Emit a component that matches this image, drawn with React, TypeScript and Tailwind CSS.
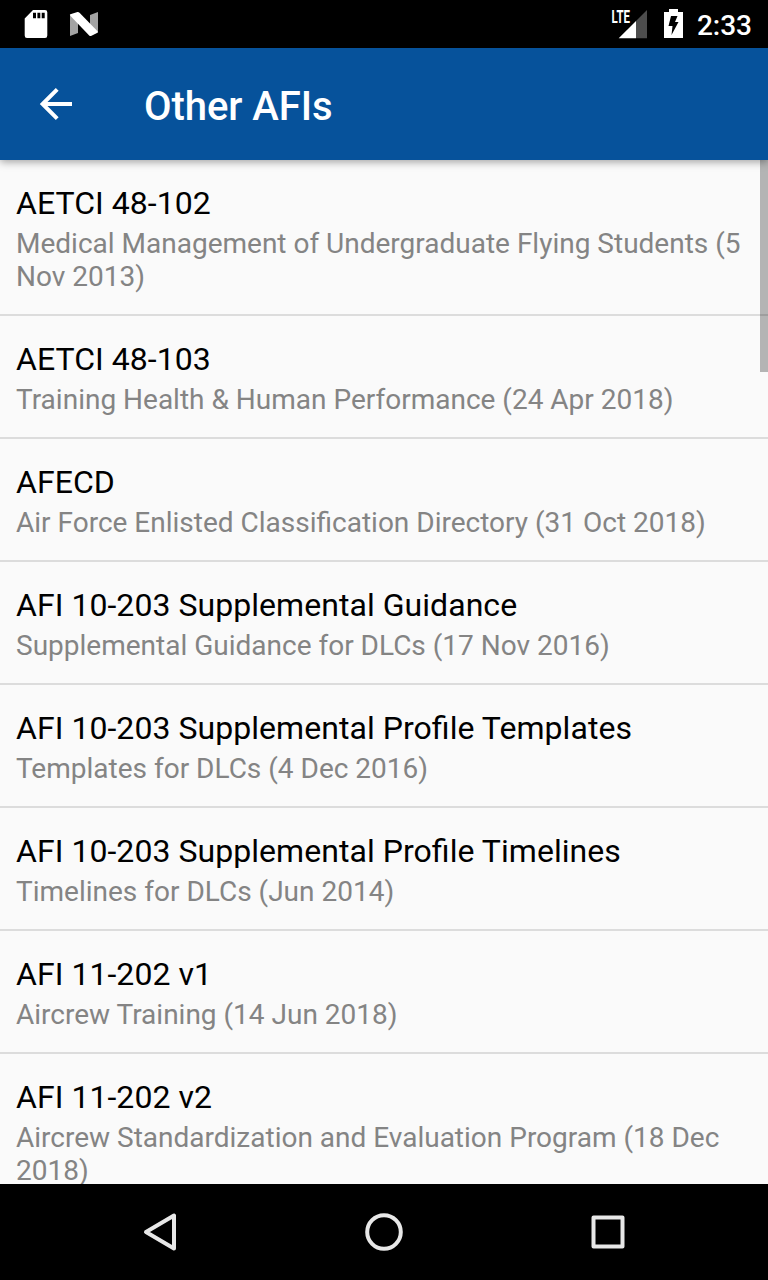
const items = [
  { title: 'AETCI 48-102', detail: 'Medical Management of Undergraduate Flying Students (5 Nov 2013)' },
  { title: 'AETCI 48-103', detail: 'Training Health & Human Performance (24 Apr 2018)' },
  { title: 'AFECD', detail: 'Air Force Enlisted Classification Directory (31 Oct 2018)' },
  { title: 'AFI 10-203 Supplemental Guidance', detail: 'Supplemental Guidance for DLCs (17 Nov 2016)' },
  { title: 'AFI 10-203 Supplemental Profile Templates', detail: 'Templates for DLCs (4 Dec 2016)' },
  { title: 'AFI 10-203 Supplemental Profile Timelines', detail: 'Timelines for DLCs (Jun 2014)' },
  { title: 'AFI 11-202 v1', detail: 'Aircrew Training (14 Jun 2018)' },
  { title: 'AFI 11-202 v2', detail: 'Aircrew Standardization and Evaluation Program (18 Dec 2018)' },
];

function StatusBar() {
  return (
    <div className="flex h-12 shrink-0 items-center justify-between bg-black text-white">
      <div className="flex">
        <svg className="ml-5 h-12 w-8" viewBox="20 0 32 48">
          <path
            fillRule="evenodd"
            fill="#fff"
            d="M33 10H45Q47.3 10 47.3 12.3V35.500Q47.300 38 45 38H27Q24.700 38 24.700 35.500V18.500ZM33 12.700V18.300H36V12.700ZM37.400 12.700V18.300H40.300V12.700ZM41.700 12.700V18.300H44.700V12.700Z"
          />
        </svg>
        <svg className="ml-3 h-12 w-10" viewBox="64 0 40 48">
          <path fill="#a3a3a3" d="M70 15L78 21V33L70 36ZM98 12V32L90 27V15Z" />
          <path fill="#fff" d="M70.300 14.300L77.500 12Q78.500 11.800 79.500 12.700L97.800 31.500Q98.300 32.200 97.500 32.800L91 36Q90 36.200 89.200 35.500L70.300 15.800Q69.500 14.700 70.300 14.300Z" />
        </svg>
      </div>
      <div className="flex items-center">
        <svg className="h-12 w-12" viewBox="604 0 48 48">
          <path fill="#fff" d="M636 21V38.300H618.700Z" />
          <path fill="#4d4d4d" d="M647 10V38.300H636V21Z" />
          <text x="611.500" y="22.800" fontSize="17.500" fontWeight="700" fontFamily="Roboto, sans-serif" fill="#fff" textLength="18.500" lengthAdjust="spacingAndGlyphs">LTE</text>
        </svg>
        <svg className="mr-[5px] ml-1 h-12 w-9" viewBox="656 0 36 48">
          <path fill="#fff" d="M669 9H678V12H683V38H664V12H669Z" />
          <path fill="#000" d="M671 16H677.500L675 22H678.500L671.500 35L672.500 26H668.500Z" />
        </svg>
        <span className="mr-4 pt-[3px] text-[28px] leading-none font-medium">2:33</span>
      </div>
    </div>
  );
}

function AppBar() {
  return (
    <header className="relative z-10 flex h-28 shrink-0 items-center bg-[#06529b] text-white shadow-[0_2px_8px_rgba(0,0,0,0.36)]">
      <svg className="ml-8 h-12 w-12" viewBox="0 0 24 24" fill="none" stroke="#fff" strokeWidth="2">
        <path d="M20 12H5M12.600 4.700L5.300 12L12.600 19.300" />
      </svg>
      <h1 className="ml-16 pt-1.5 text-[40px] leading-none font-medium tracking-[-0.05px]">Other AFIs</h1>
    </header>
  );
}

function NavigationBar() {
  return (
    <nav className="grid h-24 shrink-0 grid-cols-[48px_1fr_1fr_1fr_48px] place-items-center bg-black">
      <span />
      <svg className="h-12 w-12" viewBox="0 0 48 48" fill="none" stroke="#e8e8e8" strokeWidth="4" strokeLinejoin="round">
        <path d="M38 7.500V40.500L10 24Z" />
      </svg>
      <svg className="h-12 w-12" viewBox="0 0 48 48" fill="none" stroke="#e8e8e8" strokeWidth="4">
        <circle cx="24" cy="24" r="16.800" />
      </svg>
      <svg className="h-12 w-12" viewBox="0 0 48 48" fill="none" stroke="#e8e8e8" strokeWidth="4" strokeLinejoin="round">
        <path d="M9.500 9.500H38.500V38.500H9.500Z" />
      </svg>
      <span />
    </nav>
  );
}

export default function App() {
  return (
    <div className="flex h-[1280px] w-[768px] flex-col overflow-hidden bg-[#fafafa] font-[Roboto,sans-serif]">
      <StatusBar />
      <AppBar />
      <main className="relative min-h-0 flex-1 overflow-hidden">
        <ul>
          {items.map((item) => (
            <li key={item.title} className="border-b-2 border-[#dcdcdc] px-4 pt-6 pb-[21px]">
              <div className="mb-[5px] text-[32px] leading-[38px] tracking-[0.05px] text-black [font-feature-settings:'liga']">{item.title}</div>
              <div className="text-[28px] leading-[33px] text-[#848484]">{item.detail}</div>
            </li>
          ))}
        </ul>
        <div className="absolute top-0 right-0 h-[212px] w-2 bg-black/28" />
      </main>
      <NavigationBar />
    </div>
  );
}
